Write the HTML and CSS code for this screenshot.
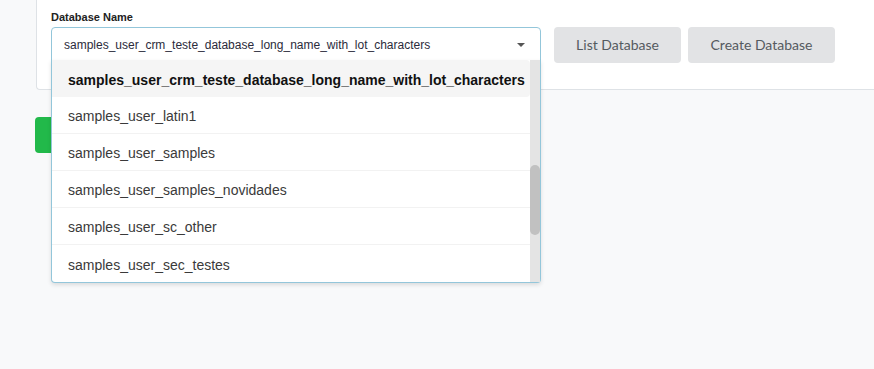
FILE: index.html
```html
<!DOCTYPE html>
<html lang="en">
<head>
    <meta charset="UTF-8">
    <meta name="viewport" content="width=device-width, initial-scale=1.0">
    <title>Database Setup</title>
    <link rel="stylesheet" href="styles.css">
</head>
<body>
    <div class="page">
        <div class="card">
            <label class="field-label" for="dbname">Database Name</label>
            <div class="field-row">
                <!-- Select with open dropdown -->
                <div class="select-wrap">
                    <div class="select-box" id="dbname">
                        <span class="select-value">samples_user_crm_teste_database_long_name_with_lot_characters</span>
                        <span class="caret"></span>
                    </div>
                    <div class="dropdown">
                        <ul class="options">
                            <li class="option active">samples_user_crm_teste_database_long_name_with_lot_characters</li>
                            <li class="option">samples_user_latin1</li>
                            <li class="option">samples_user_samples</li>
                            <li class="option">samples_user_samples_novidades</li>
                            <li class="option">samples_user_sc_other</li>
                            <li class="option">samples_user_sec_testes</li>
                        </ul>
                        <div class="scrollbar">
                            <div class="thumb"></div>
                        </div>
                    </div>
                </div>
                <button class="btn btn-grey list-btn">List Database</button>
                <button class="btn btn-grey create-btn">Create Database</button>
            </div>
        </div>

        <div class="actions">
            <button class="btn btn-green">Connect</button>
        </div>
    </div>
</body>
</html>
```

FILE: styles.css
```css
/* Page */
html, body {
    height: 100%;
}

body {
    margin: 0;
    padding: 0;
    background: #f8f9fa;
    font-family: 'Liberation Sans', Arial, sans-serif;
    color: #333;
    overflow: hidden;
}

.page {
    min-height: 100%;
}

.card {
    margin-left: 36px;
    padding: 11px 0 26px 14px;
    background: #fff;
    border-left: 1px solid #dee2e6;
    border-bottom: 1px solid #dee2e6;
    border-bottom-left-radius: 4px;
}

.field-label {
    display: block;
    font-size: 11px;
    font-weight: bold;
    line-height: 13px;
    color: #222;
    margin-bottom: 3px;
}

.field-row {
    display: flex;
    align-items: flex-start;
}

/* Select */
.select-wrap {
    position: relative;
    width: 490px;
}

.select-box {
    box-sizing: border-box;
    height: 34px;
    display: flex;
    align-items: center;
    padding: 1px 12px 0;
    border: 1px solid #93c6da;
    border-radius: 4px 4px 0 0;
    font-size: 12px;
    color: #2b2b3b;
}

.select-value {
    flex: 1;
    white-space: nowrap;
    overflow: hidden;
}

.caret {
    width: 0;
    height: 0;
    margin-right: 3px;
    border-left: 4px solid transparent;
    border-right: 4px solid transparent;
    border-top: 4px solid #555;
}

.dropdown {
    position: absolute;
    top: 33px;
    left: 0;
    width: 490px;
    height: 223px;
    box-sizing: border-box;
    display: flex;
    background: #fff;
    border: 1px solid #93c6da;
    border-top: none;
    border-radius: 0 0 4px 4px;
    box-shadow: 0 2px 4px rgba(0, 0, 0, 0.12);
    z-index: 10;
}

.options {
    list-style: none;
    margin: 0;
    padding: 0;
    flex: 1;
}

.option {
    height: 37px;
    box-sizing: border-box;
    padding: 2px 0 0 16px;
    display: flex;
    align-items: center;
    font-size: 14px;
    color: #3a3a3a;
    border-bottom: 1px solid #f2f2f2;
}

.option.active {
    background: #f5f5f5;
    font-weight: bold;
    color: #111;
    border-radius: 0 4px 4px 0;
    border-bottom: none;
}

.option:last-child {
    border-bottom: none;
}

.scrollbar {
    width: 10px;
    background: #e4e4e4;
    position: relative;
}

.thumb {
    position: absolute;
    top: 105px;
    left: 0;
    width: 10px;
    height: 70px;
    background: #c1c1c1;
    border-radius: 5px;
}

/* Buttons */
.btn {
    border: none;
    border-radius: 4px;
    height: 36px;
    font-family: Lato, sans-serif;
    font-size: 14px;
    cursor: pointer;
}

.btn-grey {
    background: #e2e3e5;
    color: #555a60;
}

.list-btn {
    margin-left: 13px;
    width: 127px;
    padding-bottom: 3px;
}

.create-btn {
    margin-left: 7px;
    width: 147px;
    padding-bottom: 3px;
}

.actions {
    margin: 27px 0 0 35px;
}

.btn-green {
    width: 110px;
    background: #22b94a;
    color: #fff;
}
```
